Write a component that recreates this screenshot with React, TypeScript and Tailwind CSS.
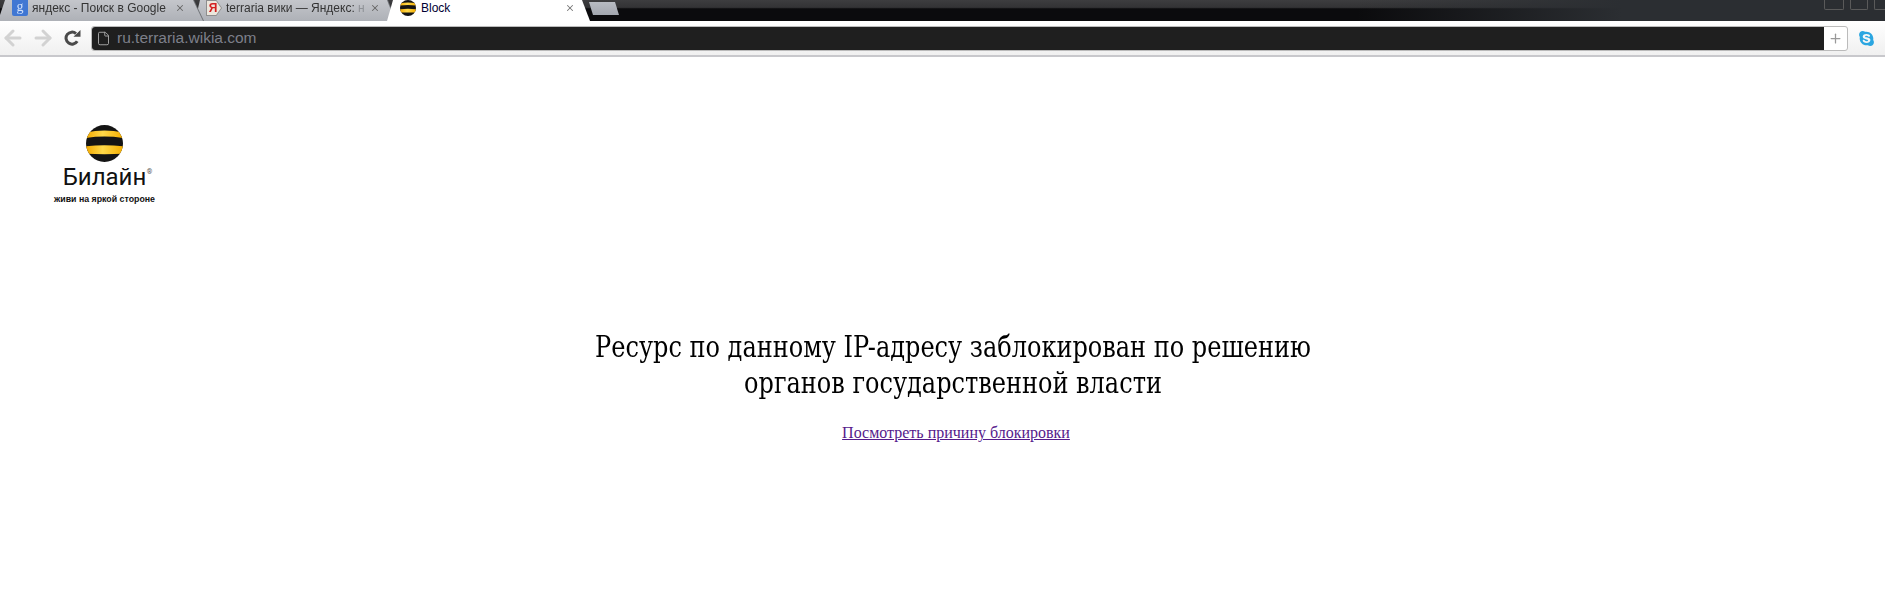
import { ArrowLeft, ArrowRight, File, X, Plus } from "lucide-react";
import { FaSkype } from "react-icons/fa";

function BeeBall({ size, id }: { size: number; id: string }) {
  return (
    <svg width={size} height={size} viewBox="0 0 40 40" className="shrink-0">
      <defs>
        <clipPath id={id}>
          <circle cx="20" cy="20" r="20" />
        </clipPath>
        <linearGradient id={`${id}-y`} x1="0" x2="1" y1="0" y2="0">
          <stop offset="0" stopColor="#f2a900" />
          <stop offset="0.45" stopColor="#ffd94a" />
          <stop offset="1" stopColor="#f5ae00" />
        </linearGradient>
      </defs>
      <g clipPath={`url(#${id})`}>
        <rect width="40" height="40" fill="#141414" />
        <path d="M0 8 Q20 4 40 8 L40 14 Q20 11 0 14 Z" fill={`url(#${id}-y)`} />
        <path d="M0 23 Q20 21 40 23 L40 31 Q20 32 0 31 Z" fill={`url(#${id}-y)`} />
      </g>
    </svg>
  );
}

function ReloadIcon() {
  return (
    <svg width="17" height="16" viewBox="0 0 17 16" className="ml-[9px] shrink-0">
      <path
        d="M13.2 11.2 A6 6 0 1 1 12 3.6"
        fill="none"
        stroke="#4a4a4a"
        strokeWidth="3"
      />
      <path d="M9.5 6.8 L16.5 6.8 L16.5 0 Z" fill="#4a4a4a" />
    </svg>
  );
}

export default function App() {
  return (
    <div className="flex h-[604px] w-[1885px] flex-col overflow-hidden bg-white font-['Liberation_Sans',sans-serif]">
      {/* tab strip */}
      <div className="flex h-[21px] items-start bg-[linear-gradient(to_right,transparent_0%,transparent_72%,#2b2e32_86%),linear-gradient(to_bottom,#3d3d3f_0,#333335_35%,#0b0b0d_42%,#0b0b0d_100%)]">
        <div className="relative z-10 shrink-0 drop-shadow-[1px_0_0_#6f7276]">
          <div className="flex h-[21px] w-[203px] items-start bg-gradient-to-b from-[#c4c6cb] to-[#aeb1b7] pl-[12px] text-[#333] [clip-path:polygon(5px_0,193px_0,100%_100%,0_100%,0_15px)]">
            <span className="flex h-[16px] w-[16px] shrink-0 items-center justify-center rounded-b-[2px] bg-[#4077d3] pb-[3px] font-['Liberation_Serif',serif] text-[14px] text-[#cfe0fb]">
              g
            </span>
            <span className="ml-[4px] whitespace-nowrap text-[12px] leading-[16px]">
              яндекс - Поиск в Google
            </span>
            <X size={10} strokeWidth={2.5} className="ml-[9px] mt-[3px] shrink-0 text-[#666]" />
          </div>
        </div>
        <div className="relative z-0 -ml-[8px] shrink-0 drop-shadow-[1px_0_0_#6f7276]">
          <div className="flex h-[21px] w-[200px] items-start bg-gradient-to-b from-[#c4c6cb] to-[#aeb1b7] pl-[11px] text-[#333] [clip-path:polygon(5px_0,192px_0,100%_100%,0_100%)]">
            <span className="flex h-[16px] w-[16px] shrink-0 items-center justify-center bg-[#8e8e8e] text-[12px] font-bold text-[#d42020] [clip-path:polygon(0_0,65%_0,100%_50%,65%_100%,0_100%)]">
              <span className="flex h-[14px] w-[14px] items-center justify-center bg-[#ece6dc] pr-[2px] [clip-path:polygon(0_0,65%_0,100%_50%,65%_100%,0_100%)]">
                Я
              </span>
            </span>
            <span className="ml-[4px] w-[138px] whitespace-nowrap text-[12px] leading-[16px]">
              terraria вики — Яндекс: <span className="text-[#8f9297]">н</span>
            </span>
            <X size={10} strokeWidth={2.5} className="ml-[6px] mt-[3px] shrink-0 text-[#666]" />
          </div>
        </div>
        <div className="relative z-20 -ml-[8px] flex h-[21px] w-[203px] shrink-0 items-start bg-white pl-[13px] text-[#000033] [clip-path:polygon(6px_0,195px_0,100%_100%,0_100%)]">
          <BeeBall size={16} id="tabball" />
          <span className="ml-[5px] w-[143px] whitespace-nowrap text-[12px] leading-[16px]">Block</span>
          <X size={10} strokeWidth={2.5} className="ml-[1px] mt-[3px] shrink-0 text-[#777]" />
        </div>
        <div className="-ml-[1px] mt-[2px] h-[13px] w-[30px] shrink-0 bg-gradient-to-b from-[#b8bbc2] to-[#a3a7af] [clip-path:polygon(0_0,26px_0,100%_100%,4px_100%)]" />
        <div className="ml-auto flex gap-[6px]">
          <div className="h-[10px] w-[20px] rounded-b-[2px] border border-t-0 border-[#5a5a5a]" />
          <div className="h-[10px] w-[18px] rounded-b-[2px] border border-t-0 border-[#5a5a5a]" />
          <div className="h-[10px] w-[11px] rounded-bl-[2px] border border-r-0 border-t-0 border-[#5a5a5a]" />
        </div>
      </div>

      {/* toolbar */}
      <div className="flex h-[36px] items-center border-b-2 border-[#c8c8cc] bg-gradient-to-b from-white to-[#f0f0f0] pl-[1px]">
        <ArrowLeft size={24} strokeWidth={3} className="shrink-0 text-[#d2d2d2]" />
        <ArrowRight size={24} strokeWidth={3} className="ml-[6px] shrink-0 text-[#d2d2d2]" />
        <ReloadIcon />
        <div className="ml-[10px] flex h-[25px] w-[1757px] items-center rounded-[3px] border border-[#bbb] bg-white">
          <div className="flex h-full flex-1 items-center rounded-l-[3px] bg-[#1f1f1f] pl-[4px]">
            <File size={15} strokeWidth={1.5} className="text-[#aaa]" />
            <span className="ml-[6px] text-[15.5px] text-[#7d7f8a]">ru.terraria.wikia.com</span>
          </div>
          <div className="flex w-[23px] justify-center">
            <Plus size={15} strokeWidth={2} className="text-[#999]" />
          </div>
        </div>
        <FaSkype size={17} className="ml-[10px] shrink-0 text-[#2ba6e1]" />
      </div>

      {/* page */}
      <div className="flex flex-1 flex-col">
        <div className="ml-[54px] mt-[68px] flex w-[101px] flex-col items-center">
          <BeeBall size={37} id="logoball" />
          <div className="relative font-['Roboto',sans-serif] text-[24px] leading-[30px] text-[#111]">
            Билайн
            <span className="absolute -right-[6px] top-[7px] text-[7px] leading-none text-[#555]">®</span>
          </div>
          <div className="mt-[2px] whitespace-nowrap text-[8.8px] font-bold leading-[10px] text-[#111]">
            живи на яркой стороне
          </div>
        </div>
        <div className="mt-[125px] pl-[21px] text-center">
          <h1 className="scale-x-[0.89] font-['DejaVu_Serif_Condensed','DejaVu_Serif',serif] text-[30px] leading-[36px] text-black">
            Ресурс по данному IP-адресу заблокирован по решению
            <br />
            органов государственной власти
          </h1>
          <a
            href="#"
            className="ml-[6px] mt-[23px] inline-block font-['Liberation_Serif',serif] text-[16px] leading-[18px] text-[#551a8b] underline"
          >
            Посмотреть причину блокировки
          </a>
        </div>
      </div>
    </div>
  );
}
